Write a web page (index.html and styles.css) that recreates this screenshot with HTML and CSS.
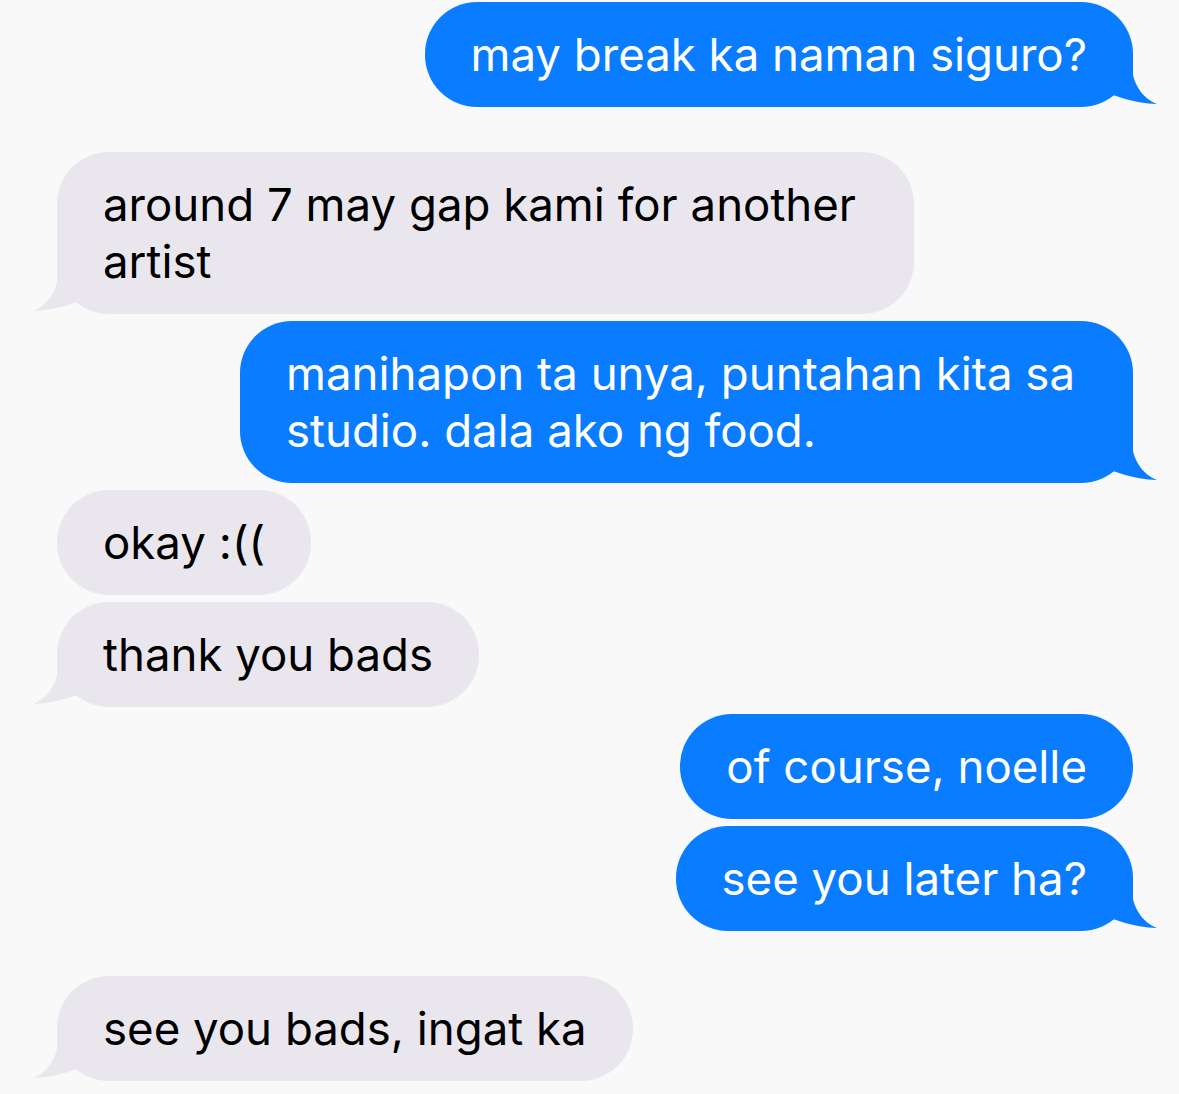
FILE: index.html
```html
<!DOCTYPE html>
<html lang="tl">
<head>
  <meta charset="UTF-8" />
  <title>Messages</title>
  <link rel="stylesheet" href="styles.css">
</head>
<body>
  <div class="thread">
    <div class="msg sent">may break ka naman siguro?
      <svg class="tail" viewBox="0 0 46 52"><path d="M0 0 L22 0 L22 20 C24 30 32 44 46 49 C36 49 18 46 2 40 L0 40 Z"/></svg>
    </div>

    <div class="msg recv multi spaced">around 7 may gap kami for another<br>artist
      <svg class="tail" viewBox="0 0 46 52"><path d="M0 0 L22 0 L22 20 C24 30 32 44 46 49 C36 49 18 46 2 40 L0 40 Z"/></svg>
    </div>

    <div class="msg sent multi">manihapon ta unya, puntahan kita sa<br>studio. dala ako ng food.
      <svg class="tail" viewBox="0 0 46 52"><path d="M0 0 L22 0 L22 20 C24 30 32 44 46 49 C36 49 18 46 2 40 L0 40 Z"/></svg>
    </div>

    <div class="msg recv">okay :((</div>
    <div class="msg recv">thank you bads
      <svg class="tail" viewBox="0 0 46 52"><path d="M0 0 L22 0 L22 20 C24 30 32 44 46 49 C36 49 18 46 2 40 L0 40 Z"/></svg>
    </div>

    <div class="msg sent">of course, noelle</div>
    <div class="msg sent">see you later ha?
      <svg class="tail" viewBox="0 0 46 52"><path d="M0 0 L22 0 L22 20 C24 30 32 44 46 49 C36 49 18 46 2 40 L0 40 Z"/></svg>
    </div>

    <div class="msg recv spaced">see you bads, ingat ka
      <svg class="tail" viewBox="0 0 46 52"><path d="M0 0 L22 0 L22 20 C24 30 32 44 46 49 C36 49 18 46 2 40 L0 40 Z"/></svg>
    </div>
  </div>
</body>
</html>
```

FILE: styles.css
```css
body {
  margin: 0;
  background: #f9f9f9;
  font-family: Inter, "Noto Sans", sans-serif;
}

.thread {
  display: flex;
  flex-direction: column;
  gap: 7px;
  padding: 2px 46px 0 57px;
}

.msg {
  position: relative;
  padding: 24px 46px;
  border-radius: 52px;
  font-size: 45.6px;
  line-height: 57px;
  white-space: nowrap;
}

/* wrapped bubbles keep a bit of slack on the right */
.msg.multi {
  padding-right: 58px;
}

.spaced {
  margin-top: 38px;
}

.sent {
  align-self: flex-end;
  background: #0a7cff;
  color: #fff;
}

.recv {
  align-self: flex-start;
  background: #e9e7ed;
  color: #000;
}

/* bubble tails */
.tail {
  position: absolute;
  bottom: 0;
  width: 46px;
  height: 52px;
}

.sent .tail {
  right: -24px;
  fill: #0a7cff;
}

.recv .tail {
  left: -24px;
  fill: #e9e7ed;
  transform: scaleX(-1);
}
```
